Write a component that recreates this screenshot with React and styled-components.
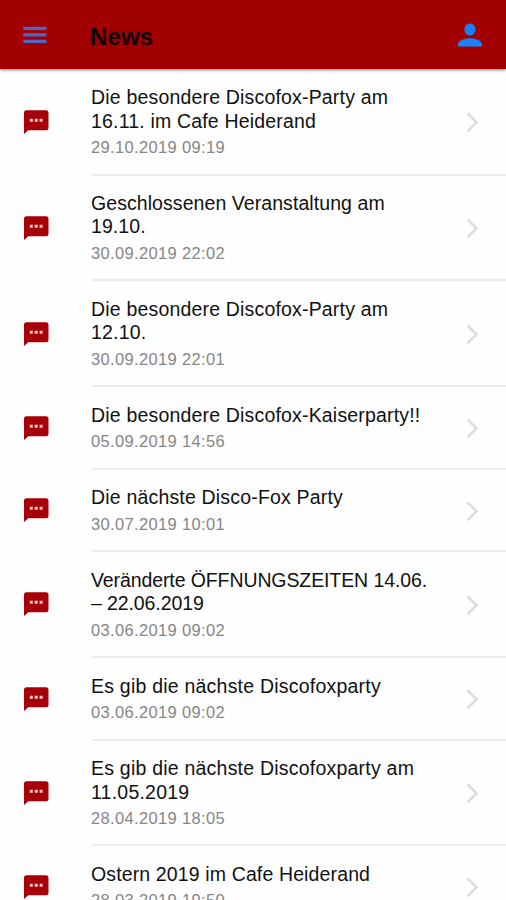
import React from 'react';
import styled, { createGlobalStyle } from 'styled-components';

const GlobalStyle = createGlobalStyle`
  * {
    box-sizing: border-box;
  }

  body {
    margin: 0;
    background-color: #fefefe;
    font-family: 'Liberation Sans', Arial, sans-serif;
    overflow: hidden;
  }
`;

const Page = styled.div`
  height: 900px;
  display: flex;
  flex-direction: column;
  overflow: hidden;
`;

const Header = styled.header`
  flex: none;
  height: 69px;
  display: flex;
  align-items: center;
  padding: 0 24px 0 23px;
  background-color: #a20000;
  box-shadow: 0 1px 3px rgba(0, 0, 0, 0.5);
  z-index: 1;
`;

const HeaderTitle = styled.h1`
  flex: 1;
  margin: 4px 0 0 43px;
  color: #0c0000;
  font-size: 24px;
  font-weight: 700;
  letter-spacing: 0.1px;
  line-height: 30px;
`;

const MenuIcon = styled.svg`
  width: 24px;
  height: 18px;
  fill: #4c68c8;
`;

const PersonIcon = styled.svg`
  width: 24px;
  height: 24px;
  fill: #1a80fb;
`;

const NewsList = styled.ul`
  margin: 0;
  padding: 0.6px 0 0;
  list-style: none;
`;

const Row = styled.li`
  display: flex;
  padding-left: 24px;
`;

const ChatIcon = styled.svg`
  flex: none;
  align-self: center;
  width: 25px;
  height: 24px;
  margin: 0 43px 1.6px 0;
`;

const RowBody = styled.div`
  flex: 1;
  display: flex;
  align-items: center;
  justify-content: space-between;
  padding: 16.5px 27px 15.1px 0;
  border-bottom: 2px solid #ededed;
`;

const RowText = styled.div`
  margin-left: -1px;
`;

const Title = styled.h2`
  margin: 0;
  color: #111;
  font-size: 19.5px;
  font-weight: 400;
  letter-spacing: ${({ $spacing }) => $spacing ?? 0.18}px;
  line-height: 23.45px;
  white-space: pre;
`;

const Date = styled.p`
  margin: 4px 0 0;
  color: #868686;
  font-size: 16.5px;
  letter-spacing: 0.35px;
  line-height: 21.4px;
`;

const Chevron = styled.svg`
  flex: none;
  width: 13px;
  height: 20px;
  fill: none;
  stroke: #dcdcdc;
  stroke-width: 2.6;
`;

const news = [
  {
    title: 'Die besondere Discofox-Party am\n16.11. im Cafe Heiderand',
    date: '29.10.2019 09:19',
  },
  {
    title: 'Geschlossenen Veranstaltung am\n19.10.',
    date: '30.09.2019 22:02',
    spacing: 0.07,
  },
  {
    title: 'Die besondere Discofox-Party am\n12.10.',
    date: '30.09.2019 22:01',
  },
  { title: 'Die besondere Discofox-Kaiserparty!!', date: '05.09.2019 14:56' },
  { title: 'Die nächste Disco-Fox Party', date: '30.07.2019 10:01' },
  {
    title: 'Veränderte ÖFFNUNGSZEITEN 14.06.\n– 22.06.2019',
    date: '03.06.2019 09:02',
    spacing: -0.1,
  },
  {
    title: 'Es gib die nächste Discofoxparty',
    date: '03.06.2019 09:02',
    spacing: 0.22,
  },
  {
    title: 'Es gib die nächste Discofoxparty am\n11.05.2019',
    date: '28.04.2019 18:05',
    spacing: 0.22,
  },
  {
    title: 'Ostern 2019 im Cafe Heiderand',
    date: '28.03.2019 19:50',
    spacing: 0.13,
  },
];

const NewsRow = ({ title, date, spacing }) => (
  <Row>
    <ChatIcon viewBox="0 0 25 24">
      <path
        d="M2.5 0.3H22a2.5 2.5 0 0 1 2.5 2.5V17.8a2.5 2.5 0 0 1-2.5 2.5H4.300L0 24V2.800A2.500 2.500 0 0 1 2.500 0.300z"
        fill="#a80008"
      />
      <path
        d="M5.800 8.700h3v3h-3zM10.700 8.700h3v3h-3zM15.600 8.700h3v3h-3z"
        fill="#f3cccc"
      />
    </ChatIcon>
    <RowBody>
      <RowText>
        <Title $spacing={spacing}>{title}</Title>
        <Date>{date}</Date>
      </RowText>
      <Chevron viewBox="0 0 13 20">
        <path d="M1.500 1.300l9 9-9 9" />
      </Chevron>
    </RowBody>
  </Row>
);

const App = () => (
  <>
    <GlobalStyle />
    <Page>
      <Header>
        <MenuIcon viewBox="0 0 24 18">
          <path d="M0.300 0.800h23.200v3.300H0.300zM0.300 7.300h23.200v3.300H0.300zM0.300 13.800h23.200v3.300H0.300z" />
        </MenuIcon>
        <HeaderTitle>News</HeaderTitle>
        <PersonIcon viewBox="0 0 24 24">
          <ellipse cx="12" cy="6.500" rx="5.600" ry="6" />
          <path d="M0 23.500v-2C0 17.300 7 15.200 12 15.200S24 17.300 24 21.500v2z" />
        </PersonIcon>
      </Header>
      <NewsList>
        {news.map((item) => (
          <NewsRow
            key={item.title}
            title={item.title}
            date={item.date}
            spacing={item.spacing}
          />
        ))}
      </NewsList>
    </Page>
  </>
);

export default App;
